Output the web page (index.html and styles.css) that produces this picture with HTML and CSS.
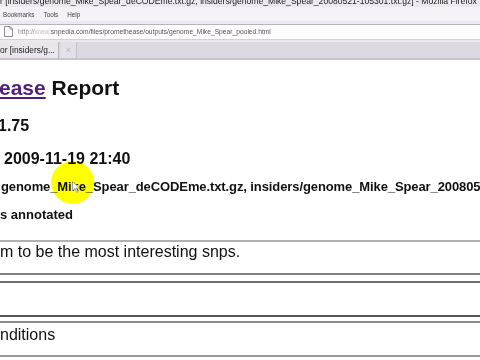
FILE: index.html
```html
<!DOCTYPE html>
<html lang="en">
<head>
    <meta charset="UTF-8">
    <meta name="viewport" content="width=device-width, initial-scale=1.0">
    <title>Promethease Report</title>
    <link rel="stylesheet" href="styles.css">
</head>
<body>
    <!-- Browser window chrome -->
    <div class="chrome">
        <div class="titlebar">
            <span class="title-text">r [insiders/genome_Mike_Spear_deCODEme.txt.gz, insiders/genome_Mike_Spear_20080521-105301.txt.gz] - Mozilla Firefox</span>
        </div>
        <div class="menubar">
            <span>Bookmarks</span>
            <span>Tools</span>
            <span>Help</span>
        </div>
        <div class="toolbar">
            <div class="urlbar">
                <svg class="page-icon" width="9" height="11" viewBox="0 0 9 11">
                    <path d="M0.5 0.5 H6 L8.5 3 V10.5 H0.5 Z" fill="#fff" stroke="#8d8a96"/>
                    <path d="M6 0.5 V3 H8.5" fill="none" stroke="#8d8a96"/>
                </svg>
                <span class="url"><span class="url-scheme">http://</span><span class="url-www">www.</span>snpedia.com/files/promethease/outputs/genome_Mike_Spear_pooled.html</span>
            </div>
        </div>
        <div class="tabstrip">
            <div class="tab">or [insiders/g...</div>
            <div class="tab-close">&times;</div>
        </div>
    </div>

    <!-- Page content (scrolled slightly to the right) -->
    <main class="page">
        <div class="highlight"></div>
        <svg class="cursor" width="8" height="12" viewBox="0 0 8 12">
            <path d="M0.5 0.5 V10 L3 7.5 L4.8 11.5 L6 11 L4.3 7 H7.5 Z" fill="#fff" stroke="#999" stroke-width="0.8"/>
        </svg>

        <h1 class="report-title"><a href="#">ease</a> Report</h1>
        <p class="meta version">1.75</p>
        <p class="meta date">2009-11-19 21:40</p>
        <p class="small files">genome_Mike_Spear_deCODEme.txt.gz, insiders/genome_Mike_Spear_20080521</p>
        <p class="small count">s annotated</p>

        <div class="box first">m to be the most interesting snps.</div>
        <div class="box second"></div>
        <div class="box third">nditions</div>
    </main>
</body>
</html>
```

FILE: styles.css
```css
/* Reset */
body {
    margin: 0;
    background-color: #fff;
    font-family: "Liberation Sans", Arial, sans-serif;
    overflow: hidden;
}

/* Window chrome */
.chrome {
    font-family: "Liberation Sans", Arial, sans-serif;
    color: #333;
}

.titlebar {
    height: 7px;
    overflow: hidden;
    background-color: #ece9f0;
    white-space: nowrap;
}

.title-text {
    display: block;
    margin-top: -4px;
    font-size: 8.6px;
    line-height: 11px;
    color: #222;
}

.menubar {
    display: flex;
    gap: 9px;
    height: 14px;
    align-items: center;
    padding-left: 3px;
    background-color: #f4f2f6;
    font-size: 6.3px;
    color: #444;
}

.toolbar {
    height: 21px;
    display: flex;
    align-items: center;
    background-color: #ebe8ee;
}

.urlbar {
    flex: 1;
    height: 14px;
    display: flex;
    align-items: center;
    gap: 5px;
    padding-left: 4px;
    background-color: #fff;
    border-top: 1px solid #b7b3c0;
    border-bottom: 1px solid #d4d1da;
}

.page-icon {
    flex: none;
}

.url {
    font-size: 6.7px;
    color: #555;
    white-space: nowrap;
}

.url-scheme {
    color: #888;
}

.url-www {
    color: #c4c1cb;
}

.tabstrip {
    height: 16px;
    display: flex;
    align-items: stretch;
    background-color: #dcd9e0;
    border-bottom: 2px solid #c9c5ce;
}

.tab {
    width: 58px;
    display: flex;
    align-items: center;
    font-size: 8.4px;
    color: #222;
    white-space: nowrap;
    overflow: hidden;
    background-color: #e9e6ec;
    border-right: 1px solid #b9b5c0;
}

.tab-close {
    width: 15px;
    margin-left: 2px;
    display: flex;
    align-items: center;
    justify-content: center;
    font-size: 9px;
    color: #b5b1bb;
    background-color: #e3e0e7;
    border-right: 1px solid #c4c0ca;
}

/* Report page */
.page {
    position: relative;
    white-space: nowrap;
    overflow: hidden;
    color: #111;
}

.report-title {
    margin: 15px 0 0;
    font-size: 21px;
    line-height: 26px;
    font-weight: bold;
    text-indent: -1px;
}

.report-title a {
    color: #4f1f7a;
}

.meta {
    margin: 0;
    font-size: 16px;
    line-height: 20px;
    font-weight: bold;
}

.version {
    margin-top: 15px;
    text-indent: -2px;
}

.date {
    margin-top: 13px;
    text-indent: 4px;
}

.small {
    margin: 0;
    font-size: 13px;
    line-height: 16px;
    font-weight: bold;
}

.files {
    margin-top: 10px;
    text-indent: 1px;
    letter-spacing: -0.1px;
}

.count {
    margin-top: 12px;
}

/* Section tables */
.box {
    box-sizing: border-box;
    height: 36px;
    border-top: 2px solid #999;
    border-bottom: 2px solid #777;
    font-size: 16px;
    line-height: 19px;
}

.box.first {
    margin-top: 17px;
    height: 35px;
    border-top-color: #b0b0b0;
    border-bottom-color: #808080;
}

.box.second {
    margin-top: 6px;
    border-top-color: #6e6e6e;
    border-bottom-color: #555;
}

.box.third {
    margin-top: 4px;
    padding-top: 2px;
    border-top-color: #8a8a8a;
    border-bottom-color: #999;
}

/* Cursor highlight from the screen recording */
.highlight {
    position: absolute;
    left: 51px;
    top: 101px;
    width: 43px;
    height: 43px;
    border-radius: 50%;
    background-color: #ffff00;
    mix-blend-mode: multiply;
}

.cursor {
    position: absolute;
    left: 72px;
    top: 121px;
}
```
